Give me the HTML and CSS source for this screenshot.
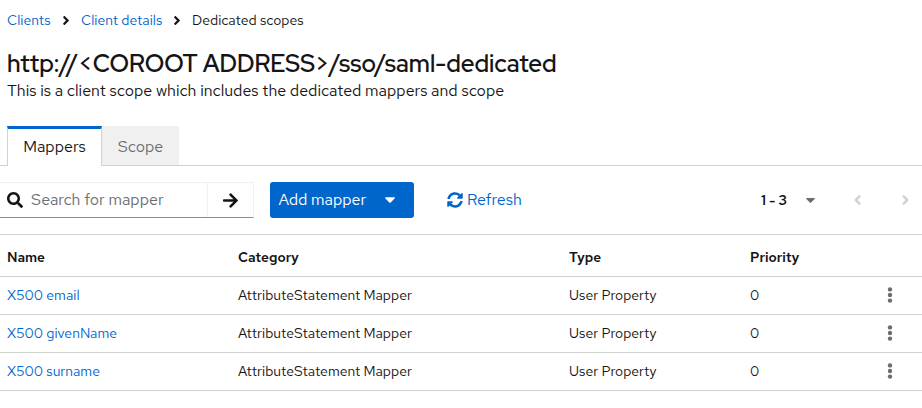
FILE: index.html
```html
<!DOCTYPE html>
<html lang="en">
<head>
<meta charset="utf-8">
<title>Dedicated scopes</title>
<link rel="stylesheet" href="styles.css">
</head>
<body>
<svg class="defs" aria-hidden="true">
  <symbol id="angle" viewBox="24 95 208 322"><path d="M224.3 273l-136 136c-9.4 9.4-24.6 9.4-33.9 0l-22.6-22.6c-9.4-9.4-9.4-24.6 0-33.9l96.4-96.4-96.4-96.4c-9.4-9.4-9.4-24.6 0-33.9L54.3 103c9.4-9.4 24.6-9.4 33.9 0l136 136c9.5 9.4 9.5 24.6.1 34z"/></symbol>
  <symbol id="caret" viewBox="10 190 300 172"><path d="M31.3 192h257.3c17.8 0 26.7 21.5 14.1 34.1L174.1 354.8c-7.8 7.8-20.5 7.8-28.3 0L17.2 226.1C4.6 213.5 13.5 192 31.3 192z"/></symbol>
  <symbol id="kebab" viewBox="0 0 6 16"><circle cx="3" cy="2.4" r="2.2"/><circle cx="3" cy="8" r="2.2"/><circle cx="3" cy="13.6" r="2.2"/></symbol>
</svg>

<nav class="breadcrumb">
  <a class="crumb crumb-clients" href="#">Clients</a>
  <svg class="crumb-sep"><use href="#angle"/></svg>
  <a class="crumb crumb-details" href="#">Client details</a>
  <svg class="crumb-sep"><use href="#angle"/></svg>
  <span class="crumb">Dedicated scopes</span>
</nav>

<header class="heading">
  <h1>http://&lt;COROOT ADDRESS&gt;/sso/saml-dedicated</h1>
  <p>This is a client scope which includes the dedicated mappers and scope</p>
</header>

<div class="tabs">
  <button class="tab tab-active">Mappers</button>
  <button class="tab">Scope</button>
</div>

<div class="toolbar">
  <div class="search">
    <div class="search-field">
      <svg class="search-icon" viewBox="0 0 512 512"><path d="M505 442.7L405.3 343c-4.5-4.5-10.6-7-17-7H372c27.6-35.3 44-79.7 44-128C416 93.1 322.9 0 208 0S0 93.1 0 208s93.1 208 208 208c48.3 0 92.7-16.4 128-44v16.3c0 6.4 2.5 12.5 7 17l99.7 99.7c9.4 9.4 24.6 9.4 33.9 0l28.3-28.3c9.4-9.4 9.4-24.6.1-34zM208 336c-70.7 0-128-57.2-128-128 0-70.7 57.2-128 128-128 70.7 0 128 57.2 128 128 0 70.7-57.2 128-128 128z"/></svg>
      <span>Search for mapper</span>
    </div>
    <button class="search-go"><svg viewBox="0 32 448 448"><path d="M190.5 66.9l22.2-22.2c9.4-9.4 24.6-9.4 33.9 0L441 239c9.4 9.4 9.4 24.6 0 33.9L246.6 467.3c-9.4 9.4-24.6 9.4-33.9 0l-22.2-22.2c-9.5-9.5-9.3-25 .4-34.3L311.4 296H24c-13.3 0-24-10.7-24-24v-32c0-13.3 10.7-24 24-24h287.4L190.9 101.2c-9.8-9.3-10-24.8-.4-34.3z"/></svg></button>
  </div>
  <button class="add">Add mapper<svg><use href="#caret"/></svg></button>
  <button class="refresh"><svg viewBox="0 0 512 512"><path d="M370.72 133.28C339.458 104.008 298.888 87.962 255.848 88c-77.458.068-144.328 53.178-162.791 126.85-1.344 5.363-6.122 9.15-11.651 9.15H24.103c-7.498 0-13.194-6.807-11.807-14.176C33.933 94.924 134.813 8 256 8c66.448 0 126.791 26.136 171.315 68.685L463.03 40.97C478.149 25.851 504 36.559 504 57.941V192c0 13.255-10.745 24-24 24H345.941c-21.382 0-32.09-25.851-16.971-40.971l41.75-41.749zM32 296h134.059c21.382 0 32.09 25.851 16.971 40.971l-41.75 41.75c31.262 29.273 71.835 45.319 114.876 45.28 77.418-.07 144.315-53.144 162.787-126.849 1.344-5.363 6.122-9.15 11.651-9.15h57.304c7.498 0 13.194 6.807 11.807 14.176C478.067 417.076 377.187 504 256 504c-66.448 0-126.791-26.136-171.315-68.685L48.97 471.03C33.851 486.149 8 475.441 8 454.059V320c0-13.255 10.745-24 24-24z"/></svg><span>Refresh</span></button>
  <div class="pager">
    <span>1 - 3</span>
    <svg class="pager-caret"><use href="#caret"/></svg>
    <svg class="pager-arrow pager-prev"><use href="#angle"/></svg>
    <svg class="pager-arrow"><use href="#angle"/></svg>
  </div>
</div>

<div class="table">
  <div class="row head"><span>Name</span><span>Category</span><span>Type</span><span>Priority</span></div>
  <div class="row"><a href="#">X500 email</a><span>AttributeStatement Mapper</span><span>User Property</span><span>0</span><svg class="kebab"><use href="#kebab"/></svg></div>
  <div class="row"><a href="#">X500 givenName</a><span>AttributeStatement Mapper</span><span>User Property</span><span>0</span><svg class="kebab"><use href="#kebab"/></svg></div>
  <div class="row"><a href="#">X500 surname</a><span>AttributeStatement Mapper</span><span>User Property</span><span>0</span><svg class="kebab"><use href="#kebab"/></svg></div>
</div>
</body>
</html>
```
FILE: styles.css
```css
* { box-sizing: border-box; }
body {
  margin: 0;
  height: 408px;
  overflow: hidden;
  background: #fff;
  color: #151515;
  font: 14px/20px "Red Hat Text", Inter, sans-serif;
}
a { color: #06c; text-decoration: none; }
button { margin: 0; padding: 0; border: 0; background: none; font: inherit; color: inherit; }
svg { display: block; fill: currentColor; flex: none; }
.defs { display: none; }

.breadcrumb { display: flex; align-items: center; height: 40px; padding-left: 7px; white-space: nowrap; }
.crumb { font-size: 14px; }
.crumb-clients { width: 56px; }
.crumb-details { width: 93px; }
.crumb-sep { width: 6px; height: 9px; }
.crumb-sep + .crumb { margin-left: 12px; }

.heading { height: 86px; padding: 9px 0 0 7px; white-space: nowrap; }
h1 { margin: 0; font: 600 24px/30px "Red Hat Display", Inter, sans-serif; letter-spacing: -0.02px; }
p { margin: 2px 0 0; font-size: 16px; line-height: 20px; }

.tabs { display: flex; height: 40px; padding-left: 7px; border-bottom: 1px solid #d2d2d2; }
.tab { width: 77px; height: 39px; padding-top: 2px; background: #f0f0f0; color: #6a6e73; font-size: 16px; }
.tab-active {
  width: 95px;
  height: 40px;
  padding: 0 0 2px;
  background: #fff;
  color: #151515;
  border: solid #d2d2d2;
  border-width: 3px 1px 0;
  border-top-color: #06c;
}

.toolbar { display: flex; height: 69px; padding-top: 16px; border-bottom: 1px solid #d2d2d2; font-size: 16px; }
.search { display: flex; width: 254.4px; height: 36px; border: solid #f0f0f0; border-width: 1px 1px 1px 0; border-bottom-color: #8a8d90; }
.search-field { display: flex; align-items: center; width: 208px; padding-left: 7px; gap: 8px; border-right: 1px solid #f0f0f0; color: #6a6e73; }
.search-icon { width: 16px; height: 16px; color: #151515; }
.search-go { display: grid; flex: 1; place-items: center; }
.search-go svg { width: 15px; height: 15px; }
.add { display: flex; align-items: center; justify-content: space-between; width: 143.6px; height: 36px; margin-left: 16px; padding: 0 19px 0 8px; border-radius: 3px; background: #06c; color: #fff; }
.add svg { width: 10px; height: 6px; }
.refresh { display: flex; align-items: center; height: 36px; margin-left: 33px; gap: 4px; color: #06c; }
.refresh svg { width: 16px; height: 16px; }
.pager { display: flex; align-items: center; height: 36px; margin-left: auto; padding-right: 13px; font-size: 14px; font-weight: 600; }
.pager-caret { width: 9px; height: 5px; margin: 1px 39px 0 19px; color: #6a6e73; }
.pager-arrow { width: 7px; height: 10px; color: #d2d2d2; }
.pager-prev { margin-right: 41px; transform: scaleX(-1); }

.row { display: grid; grid-template-columns: 231px 331px 181px 137px 6px; align-items: center; height: 38px; padding: 0 0 1px 7px; border-bottom: 1px solid #d2d2d2; white-space: nowrap; }
.head { height: 42px; padding-top: 4px; padding-bottom: 2px; font-weight: 600; font-size: 13.7px; }
.kebab { width: 6px; height: 16px; color: #6a6e73; margin-top: -1px; }
```
